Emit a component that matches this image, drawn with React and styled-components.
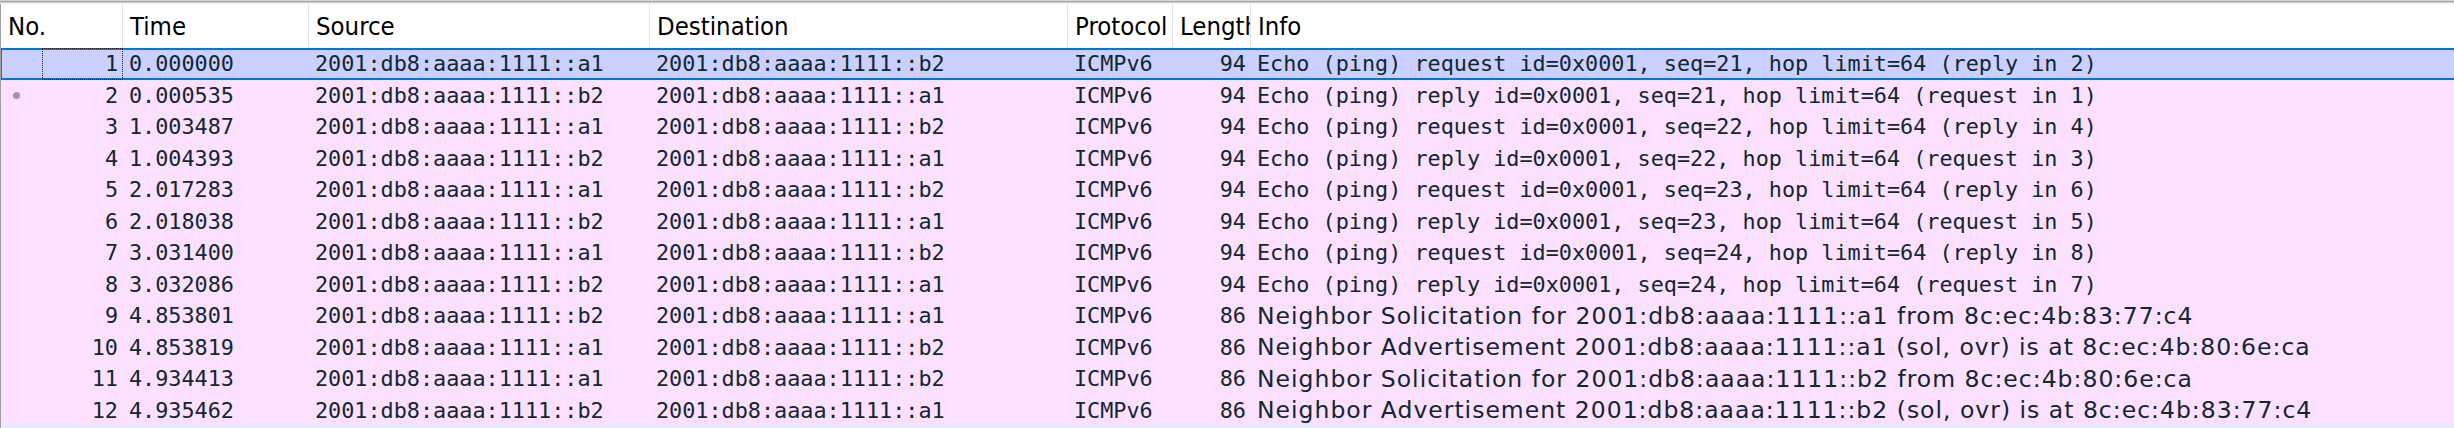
import React from 'react';
import styled, { createGlobalStyle } from 'styled-components';

const GlobalStyle = createGlobalStyle`
  html, body {
    margin: 0;
    padding: 0;
    background: #ffffff;
    overflow: hidden;
  }
`;

const COLUMNS = '122px 186px 341px 418px 105px 78px 1fr';

const Frame = styled.div`
  width: 2454px;
  height: 428px;
  overflow: hidden;
  background: #ffffff;
  display: flex;
  flex-direction: column;
`;

// the splitter edge above the packet list
const TopRule = styled.div`
  height: 4px;
  flex: none;
  background: linear-gradient(
    to bottom,
    #d6d6d6 0px, #d6d6d6 1px,
    #a3a3a3 1px, #a3a3a3 2px,
    #cfcfcf 2px, #cfcfcf 3px,
    #f0f0f0 3px, #f0f0f0 4px
  );
`;

const HeaderRow = styled.div`
  display: grid;
  grid-template-columns: ${COLUMNS};
  height: 44px;
  flex: none;
  border-left: 1px solid #a0a0a0;
`;

const HeaderCell = styled.div`
  display: flex;
  align-items: center;
  padding-left: 7px;
  overflow: hidden;
  white-space: nowrap;
  border-right: ${p => (p.last ? 'none' : '1px solid #e5e5e5')};
  font-family: "DejaVu Sans Condensed", "DejaVu Sans", sans-serif;
  font-stretch: condensed;
  font-size: 25.5px;
  color: #000000;
`;

const Rows = styled.div`
  display: flex;
  flex-direction: column;
`;

const PacketRow = styled.div`
  display: grid;
  grid-template-columns: ${COLUMNS};
  height: 31.5px;
  flex: none;
  align-items: stretch;
  background: ${p => (p.selected ? '#cad0ff' : p.bg || '#fce0ff')};
  color: #12272e;
  border-left: 1px solid #a0a0a0;
  box-shadow: ${p =>
    p.selected
      ? 'inset 0 2px 0 #0078d7, inset 0 -2px 0 #0078d7, inset 1px 0 0 #0078d7'
      : 'none'};
  font-family: "DejaVu Sans Mono", "Liberation Mono", monospace;
  font-size: 21.8px;
`;

const Cell = styled.div`
  display: flex;
  align-items: center;
  justify-content: ${p => (p.right ? 'flex-end' : 'flex-start')};
  padding: ${p => (p.right ? '0 5px 0 0' : '0 0 0 6px')};
  overflow: hidden;
  white-space: nowrap;
`;

const NumberCell = styled.div`
  display: flex;
  align-items: center;
  justify-content: space-between;
  overflow: hidden;
  white-space: nowrap;
`;

const RelatedDot = styled.span`
  width: 7px;
  height: 7px;
  margin-left: 12px;
  border-radius: 50%;
  background: #9a9a9a;
  flex: none;
`;

const NumberText = styled.span`
  display: flex;
  align-items: center;
  justify-content: flex-end;
  height: 100%;
  box-sizing: border-box;
  padding-right: 4px;
  width: ${p => (p.focused ? '81px' : 'auto')};
  border: ${p => (p.focused ? '1px dotted #202020' : 'none')};
  margin-right: ${p => (p.focused ? '0' : '1px')};
`;

const InfoText = styled.span`
  font-family: ${p =>
    p.proportional ? '"DejaVu Sans", "Noto Sans", sans-serif' : 'inherit'};
  font-size: ${p => (p.proportional ? '23.5px' : 'inherit')};
  letter-spacing: ${p => (p.proportional ? '1px' : 'normal')};
`;

const headers = ['No.', 'Time', 'Source', 'Destination', 'Protocol', 'Length', 'Info'];

const A1 = '2001:db8:aaaa:1111::a1';
const B2 = '2001:db8:aaaa:1111::b2';

const packets = [
  { no: 1, time: '0.000000', src: A1, dst: B2, len: 94, info: 'Echo (ping) request id=0x0001, seq=21, hop limit=64 (reply in 2)' },
  { no: 2, time: '0.000535', src: B2, dst: A1, len: 94, info: 'Echo (ping) reply id=0x0001, seq=21, hop limit=64 (request in 1)' },
  { no: 3, time: '1.003487', src: A1, dst: B2, len: 94, info: 'Echo (ping) request id=0x0001, seq=22, hop limit=64 (reply in 4)' },
  { no: 4, time: '1.004393', src: B2, dst: A1, len: 94, info: 'Echo (ping) reply id=0x0001, seq=22, hop limit=64 (request in 3)' },
  { no: 5, time: '2.017283', src: A1, dst: B2, len: 94, info: 'Echo (ping) request id=0x0001, seq=23, hop limit=64 (reply in 6)' },
  { no: 6, time: '2.018038', src: B2, dst: A1, len: 94, info: 'Echo (ping) reply id=0x0001, seq=23, hop limit=64 (request in 5)' },
  { no: 7, time: '3.031400', src: A1, dst: B2, len: 94, info: 'Echo (ping) request id=0x0001, seq=24, hop limit=64 (reply in 8)' },
  { no: 8, time: '3.032086', src: B2, dst: A1, len: 94, info: 'Echo (ping) reply id=0x0001, seq=24, hop limit=64 (request in 7)' },
  { no: 9, time: '4.853801', src: B2, dst: A1, len: 86, info: 'Neighbor Solicitation for 2001:db8:aaaa:1111::a1 from 8c:ec:4b:83:77:c4', nd: true },
  { no: 10, time: '4.853819', src: A1, dst: B2, len: 86, info: 'Neighbor Advertisement 2001:db8:aaaa:1111::a1 (sol, ovr) is at 8c:ec:4b:80:6e:ca', nd: true },
  { no: 11, time: '4.934413', src: A1, dst: B2, len: 86, info: 'Neighbor Solicitation for 2001:db8:aaaa:1111::b2 from 8c:ec:4b:80:6e:ca', nd: true },
  { no: 12, time: '4.935462', src: B2, dst: A1, len: 86, info: 'Neighbor Advertisement 2001:db8:aaaa:1111::b2 (sol, ovr) is at 8c:ec:4b:83:77:c4', nd: true },
];

export default function App() {
  return (
    <>
      <GlobalStyle />
      <Frame>
        <TopRule />
        <HeaderRow>
          {headers.map((h, i) => (
            <HeaderCell key={h} last={i === headers.length - 1}>{h}</HeaderCell>
          ))}
        </HeaderRow>
        <Rows>
          {packets.map(p => (
            <PacketRow key={p.no} selected={p.no === 1}>
              <NumberCell>
                {p.no === 2 ? <RelatedDot /> : <span />}
                <NumberText focused={p.no === 1}>{p.no}</NumberText>
              </NumberCell>
              <Cell>{p.time}</Cell>
              <Cell>{p.src}</Cell>
              <Cell>{p.dst}</Cell>
              <Cell>ICMPv6</Cell>
              <Cell right>{p.len}</Cell>
              <Cell>
                <InfoText proportional={p.nd}>{p.info}</InfoText>
              </Cell>
            </PacketRow>
          ))}
          <PacketRow bg="#daeeff" />
        </Rows>
      </Frame>
    </>
  );
}
